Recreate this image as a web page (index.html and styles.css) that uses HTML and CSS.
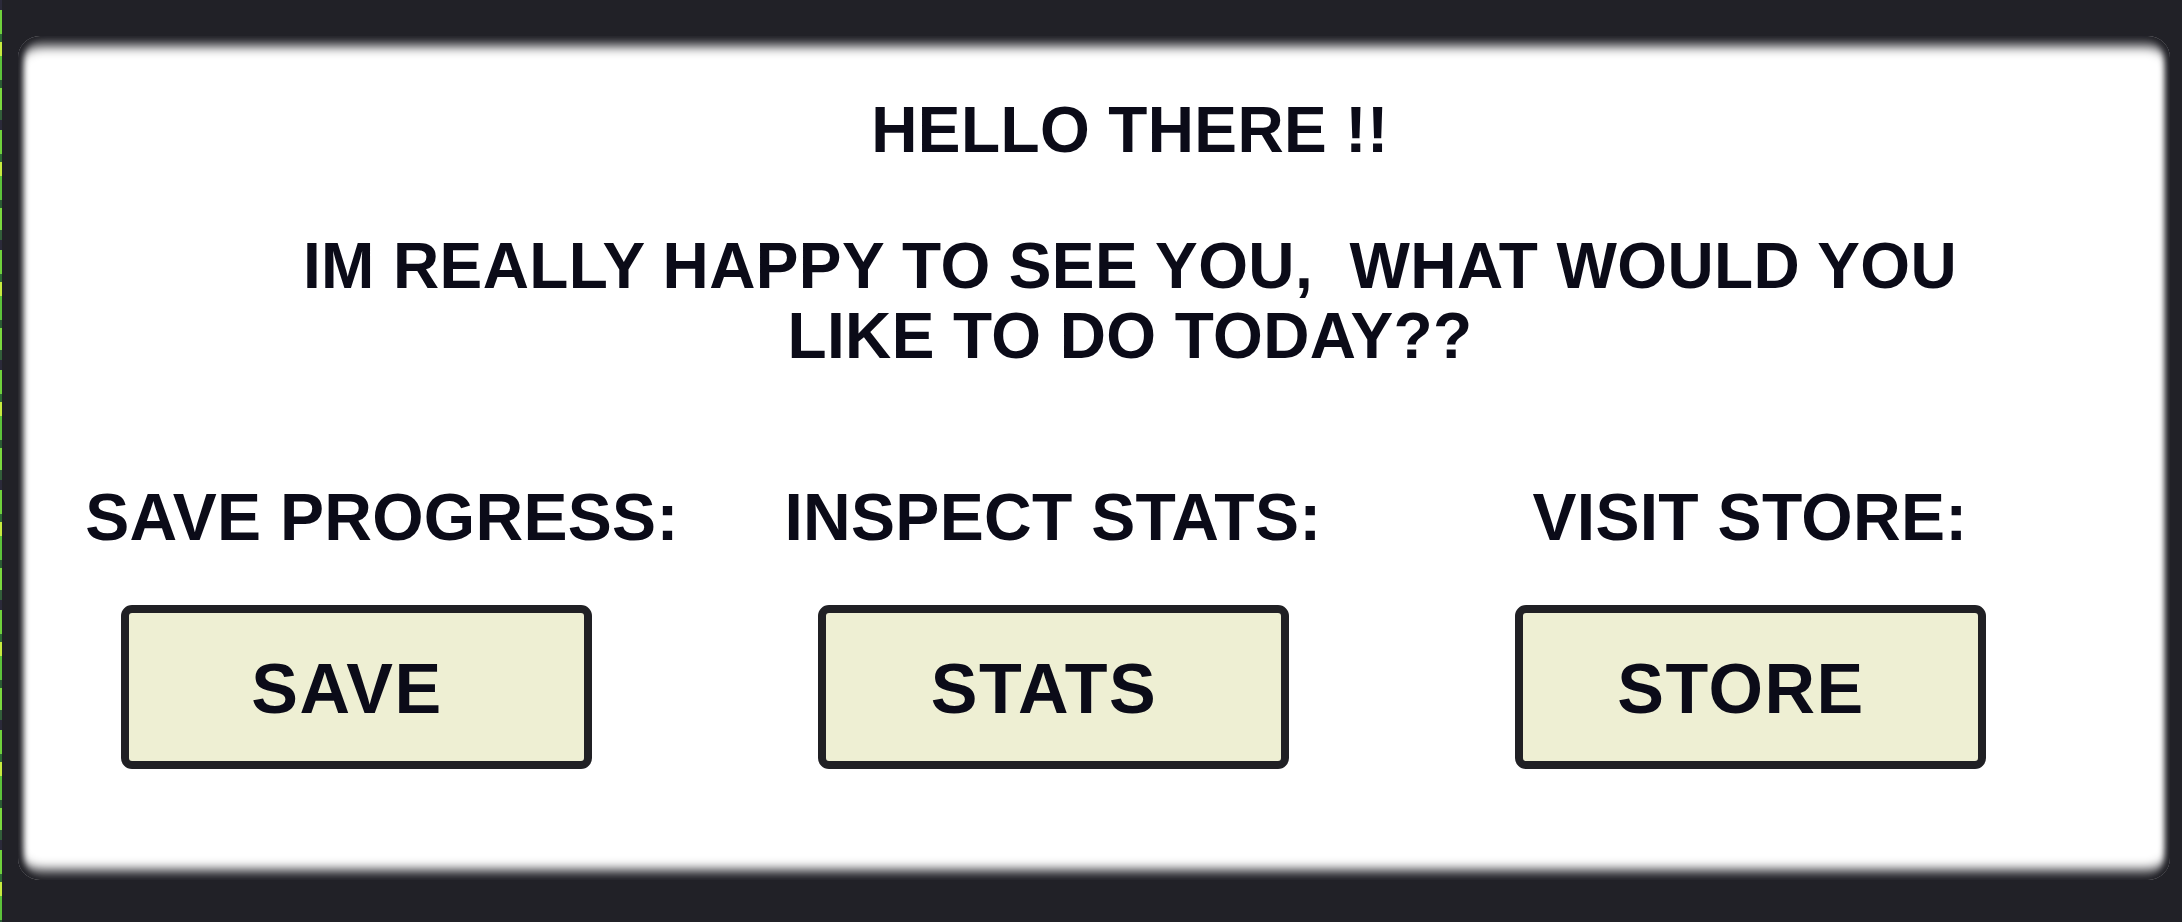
FILE: index.html
```html
<!DOCTYPE html>
<html lang="en">
<head>
<meta charset="utf-8">
<title>Menu</title>
<link rel="stylesheet" href="styles.css">
</head>
<body>
<div class="edge-strip"></div>
<main class="panel">
  <h1 class="greeting">HELLO THERE !!</h1>
  <p class="message">IM REALLY HAPPY TO SEE YOU,&nbsp; WHAT WOULD YOU<br>LIKE TO DO TODAY??</p>
  <section class="actions">
    <div class="action action--save">
      <p class="action-label">SAVE PROGRESS:</p>
      <button class="action-button">SAVE</button>
    </div>
    <div class="action">
      <p class="action-label">INSPECT STATS:</p>
      <button class="action-button">STATS</button>
    </div>
    <div class="action">
      <p class="action-label">VISIT STORE:</p>
      <button class="action-button">STORE</button>
    </div>
  </section>
</main>
</body>
</html>
```

FILE: styles.css
```css
html, body {
  margin: 0;
  padding: 0;
}

body {
  height: 922px;
  display: flex;
  background: #212127;
  font-family: "Liberation Sans", Arial, sans-serif;
  color: #0b0b18;
  overflow: hidden;
}

.edge-strip {
  width: 2px;
  flex: none;
  background: repeating-linear-gradient(
    to bottom,
    #2b2a3a 0px, #2b2a3a 10px,
    #6fd13c 10px, #6fd13c 34px,
    #2f6b35 34px, #2f6b35 42px,
    #c6ec3f 42px, #c6ec3f 56px,
    #5cc23a 56px, #5cc23a 80px,
    #2b5e34 80px, #2b5e34 88px,
    #7ad83e 88px, #7ad83e 110px,
    #335f3a 110px, #335f3a 120px
  );
}

.panel {
  flex: 1;
  margin: 36px 12px 42px 16px;
  padding-top: 59px;
  background: #ffffff;
  border-radius: 22px;
  box-shadow:
    inset 0 14px 12px -4px #212127,
    inset 0 -14px 12px -4px #212127,
    inset 8px 0 6px -3px #212127,
    inset -8px 0 6px -3px #212127;
}

.greeting,
.message {
  margin: 0;
  padding-left: 72px;
  text-align: center;
  font-size: 64px;
  line-height: 70px;
  font-weight: 700;
  letter-spacing: 0.4px;
}

.message {
  margin-top: 66px;
}

.actions {
  display: grid;
  grid-template-columns: repeat(3, 676px);
  column-gap: 21px;
  margin-top: 111px;
}

.action {
  display: flex;
  flex-direction: column;
  align-items: center;
}

.action-label {
  margin: 0;
  font-size: 66px;
  line-height: 70px;
  font-weight: 700;
  letter-spacing: 0.3px;
}

.action--save .action-label {
  padding-left: 52px;
}

.action-button {
  margin-top: 53px;
  width: 471px;
  height: 164px;
  box-sizing: border-box;
  display: flex;
  align-items: center;
  justify-content: center;
  padding: 4px 18px 0 0;
  border: 8px solid #202024;
  border-radius: 11px;
  background: #eeefd3;
  color: #0b0b18;
  font-family: "Liberation Sans", Arial, sans-serif;
  font-size: 70px;
  font-weight: 700;
  letter-spacing: 1.5px;
  cursor: pointer;
}
```
